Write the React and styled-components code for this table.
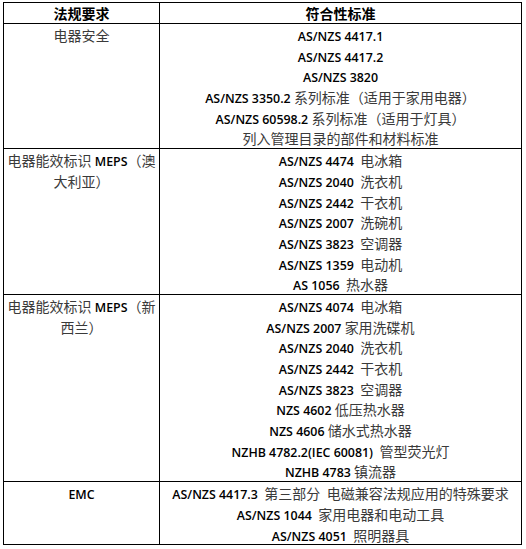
import React from 'react';
import styled, { createGlobalStyle } from 'styled-components';

const GlobalStyle = createGlobalStyle`
    html, body {
        margin: 0;
        padding: 0;
        background: #fff;
    }
`;

const rows = [
    {
        name: ['电器安全'],
        items: [
            'AS/NZS 4417.1',
            'AS/NZS 4417.2',
            'AS/NZS 3820',
            'AS/NZS 3350.2 系列标准（适用于家用电器）',
            'AS/NZS 60598.2 系列标准（适用于灯具）',
            '列入管理目录的部件和材料标准',
        ],
    },
    {
        name: ['电器能效标识 MEPS（澳', '大利亚）'],
        items: [
            'AS/NZS 4474  电冰箱',
            'AS/NZS 2040  洗衣机',
            'AS/NZS 2442  干衣机',
            'AS/NZS 2007  洗碗机',
            'AS/NZS 3823  空调器',
            'AS/NZS 1359  电动机',
            'AS 1056  热水器',
        ],
    },
    {
        name: ['电器能效标识 MEPS（新', '西兰）'],
        items: [
            'AS/NZS 4074  电冰箱',
            'AS/NZS 2007 家用洗碟机',
            'AS/NZS 2040  洗衣机',
            'AS/NZS 2442  干衣机',
            'AS/NZS 3823  空调器',
            'NZS 4602 低压热水器',
            'NZS 4606 储水式热水器',
            'NZHB 4782.2(IEC 60081)  管型荧光灯',
            'NZHB 4783 镇流器',
        ],
    },
    {
        name: ['EMC'],
        items: [
            'AS/NZS 4417.3  第三部分  电磁兼容法规应用的特殊要求',
            'AS/NZS 1044  家用电器和电动工具',
            'AS/NZS 4051  照明器具',
        ],
    },
];

// split a line into latin / cjk runs so each gets its own font
const CJK = /[\u3000-\u9fff\uff00-\uffef]/;
const splitRuns = text => text.match(/[\u3000-\u9fff\uff00-\uffef]+|[^\u3000-\u9fff\uff00-\uffef]+/g) || [];

function MixedLine({ text }) {
    return (
        <Line>
            {splitRuns(text).map((run, i) =>
                CJK.test(run)
                    ? <Han key={i}>{run}</Han>
                    : <Latin key={i}>{run}</Latin>
            )}
        </Line>
    );
}

export default function App() {
    return (
        <>
            <GlobalStyle />
            <Table>
                <colgroup>
                    <NameCol />
                    <col />
                </colgroup>
                <thead>
                    <tr>
                        <Head>法规要求</Head>
                        <Head>符合性标准</Head>
                    </tr>
                </thead>
                <tbody>
                    {rows.map((row, i) => (
                        <tr key={i}>
                            <Cell>
                                {row.name.map((n, j) => <MixedLine key={j} text={n} />)}
                            </Cell>
                            <Cell>
                                {row.items.map((item, j) => <MixedLine key={j} text={item} />)}
                            </Cell>
                        </tr>
                    ))}
                </tbody>
            </Table>
        </>
    );
}

const Table = styled.table`
    margin: 2px 0 0 3px;
    width: 519px;
    table-layout: fixed;
    border-collapse: collapse;
    font-family: 'Noto Sans CJK SC', sans-serif;
`;

const NameCol = styled.col`
    width: 156px;
`;

const Head = styled.th`
    border: 1px solid #000;
    padding: 0;
    height: 20px;
    font-size: 14px;
    line-height: 20px;
    font-weight: 700;
    color: #000;
    text-align: center;
`;

const Cell = styled.td`
    border: 1px solid #000;
    padding: 0;
    vertical-align: top;
    text-align: center;
`;

const Line = styled.div`
    height: 20.7px;
    line-height: 20.7px;
    white-space: pre;
`;

const Latin = styled.span`
    font-family: 'Open Sans', 'Liberation Sans', sans-serif;
    font-size: 12.4px;
    font-weight: 600;
    color: #000;
`;

const Han = styled.span`
    font-family: 'Noto Sans CJK SC', sans-serif;
    font-size: 14px;
    font-weight: 400;
    color: #3a3a3a;
`;
